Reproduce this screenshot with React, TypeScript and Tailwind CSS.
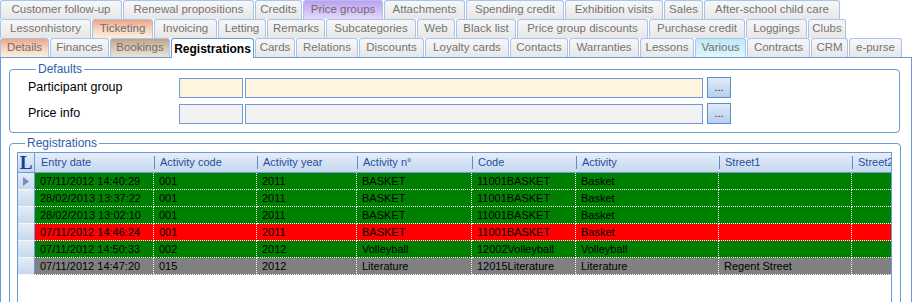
type Tone = "gray" | "orange" | "tan" | "purple" | "cyan" | "active";

type Tab = { label: string; w: number; tone?: Tone };

const tones: Record<Tone, string> = {
  gray: "bg-linear-to-b from-[#f7f7f7] to-[#e7e7e7] border-[#a7c4ea] text-[#747474]",
  orange: "bg-linear-to-b from-[#eea486] via-[#f6d4bd] to-[#fbeedf] border-[#a7c4ea] text-[#6e6e6e]",
  tan: "bg-linear-to-b from-[#bea488] via-[#d9c8b2] to-[#ede4d8] border-[#a7c4ea] text-[#6e6e6e]",
  purple: "bg-linear-to-b from-[#bf9ff2] to-[#e4d9fb] border-[#a7c4ea] text-[#6e6e6e]",
  cyan: "bg-linear-to-b from-[#bfe8f6] to-[#e3f5fb] border-[#a7c4ea] text-[#6e6e6e]",
  active: "bg-white border-[#6a9ad8] text-black font-bold h-[20px] -mb-px z-10 text-[12px]",
};

const row1: Tab[] = [
  { label: "Customer follow-up", w: 122 },
  { label: "Renewal propositions", w: 131 },
  { label: "Credits", w: 47 },
  { label: "Price groups", w: 80, tone: "purple" },
  { label: "Attachments", w: 81 },
  { label: "Spending credit", w: 98 },
  { label: "Exhibition visits", w: 98 },
  { label: "Sales", w: 39 },
  { label: "After-school child care", w: 136 },
];

const row2: Tab[] = [
  { label: "Lessonhistory", w: 91 },
  { label: "Ticketing", w: 61, tone: "orange" },
  { label: "Invoicing", w: 63 },
  { label: "Letting", w: 48 },
  { label: "Remarks", w: 58 },
  { label: "Subcategories", w: 90 },
  { label: "Web", w: 38 },
  { label: "Black list", w: 60 },
  { label: "Price group discounts", w: 131 },
  { label: "Purchase credit", w: 96 },
  { label: "Loggings", w: 61 },
  { label: "Clubs", w: 38 },
];

const row3: Tab[] = [
  { label: "Details", w: 49, tone: "orange" },
  { label: "Finances", w: 59 },
  { label: "Bookings", w: 60, tone: "tan" },
  { label: "Registrations", w: 83, tone: "active" },
  { label: "Cards", w: 40 },
  { label: "Relations", w: 62 },
  { label: "Discounts", w: 65 },
  { label: "Loyalty cards", w: 84 },
  { label: "Contacts", w: 58 },
  { label: "Warranties", w: 70 },
  { label: "Lessons", w: 54 },
  { label: "Various", w: 51, tone: "cyan" },
  { label: "Contracts", w: 63 },
  { label: "CRM", w: 37 },
  { label: "e-purse", w: 53 },
];

const columns = [
  { title: "Entry date", w: 119 },
  { title: "Activity code", w: 103 },
  { title: "Activity year", w: 100 },
  { title: "Activity n°", w: 115 },
  { title: "Code", w: 104 },
  { title: "Activity", w: 143 },
  { title: "Street1", w: 133 },
  { title: "Street2", w: 0 },
];

const rows = [
  { bg: "bg-[#008000]", cells: ["07/11/2012 14:40:29", "001", "2011", "BASKET", "11001BASKET", "Basket", "", ""] },
  { bg: "bg-[#008000]", cells: ["28/02/2013 13:37:22", "001", "2011", "BASKET", "11001BASKET", "Basket", "", ""] },
  { bg: "bg-[#008000]", cells: ["28/02/2013 13:02:10", "001", "2011", "BASKET", "11001BASKET", "Basket", "", ""] },
  { bg: "bg-[#ff0000]", cells: ["07/11/2012 14:46:24", "001", "2011", "BASKET", "11001BASKET", "Basket", "", ""] },
  { bg: "bg-[#008000]", cells: ["07/11/2012 14:50:33", "002", "2012", "Volleyball", "12002Volleyball", "Volleyball", "", ""] },
  { bg: "bg-[#808080]", cells: ["07/11/2012 14:47:20", "015", "2012", "Literature", "12015Literature", "Literature", "Regent Street", ""] },
];

function TabRow({ tabs }: { tabs: Tab[] }) {
  return (
    <div className="flex items-end gap-px h-[19px] text-[11.5px]">
      {tabs.map((t) => (
        <div
          key={t.label}
          style={{ width: t.w }}
          className={`relative h-[19px] shrink-0 flex items-center justify-center border border-b-0 rounded-t-[3px] whitespace-nowrap ${tones[t.tone ?? "gray"]}`}
        >
          {t.label}
        </div>
      ))}
    </div>
  );
}

function BrowseButton() {
  return (
    <button className="w-[24px] h-[21px] ml-1 border border-[#5d8ed5] bg-linear-to-b from-[#e2ecf7] via-[#c9dcf1] to-[#b6d1ee] text-[#7a0000] text-[11px] leading-none flex items-end justify-center pb-[4px]">
      ...
    </button>
  );
}

export default function App() {
  return (
    <div
      className="w-[913px] h-[302px] overflow-hidden bg-white text-[12px]"
      style={{ fontFamily: '"Liberation Sans", Arial, sans-serif' }}
    >
      <TabRow tabs={row1} />
      <TabRow tabs={row2} />
      <TabRow tabs={row3} />

      <div className="w-[912px] h-[260px] border border-[#6a9ad8] pt-[4px] pl-[8px]">
        <fieldset className="w-[891px] border border-[#6a9ad8] rounded-[4px] pl-[18px] pb-[8px]">
          <legend className="ml-[8px] px-[2px] text-[#2c5ea8] leading-[14px]">Defaults</legend>
          <div className="flex items-center h-[21px] mt-px">
            <span className="w-[151px] text-black text-[12.5px]">Participant group</span>
            <div className="w-[64px] h-[20px] border border-[#6f9ad4] bg-[#fdf5dd]" />
            <div className="w-[458px] h-[20px] ml-[2px] border border-[#6f9ad4] bg-[#fdf5dd]" />
            <BrowseButton />
          </div>
          <div className="flex items-center h-[21px] mt-[5px]">
            <span className="w-[151px] text-black text-[12.5px]">Price info</span>
            <div className="w-[64px] h-[20px] border border-[#6f9ad4] bg-[#f2f2f2]" />
            <div className="w-[458px] h-[20px] ml-[2px] border border-[#6f9ad4] bg-[#f2f2f2]" />
            <BrowseButton />
          </div>
        </fieldset>

        <fieldset className="w-[892px] mt-[3px] h-[200px] border border-[#6a9ad8] rounded-[4px] pl-[7px] pr-[7px]">
          <legend className="ml-[8px] px-[2px] text-[#2c5ea8] leading-[14px]">Registrations</legend>
          <div className="mt-[2px] w-[875px] h-[180px] border border-[#6a9ad8] bg-white text-[11px] overflow-hidden">
            <div className="flex h-[20px] border-b border-[#6a9ad8] bg-linear-to-b from-[#e6eef9] to-[#c6d7ee]">
              <div
                className="w-[17px] shrink-0 border-r border-[#6a9ad8] flex items-center justify-center text-[#1b3f8f] font-bold text-[19px] leading-none"
                style={{ fontFamily: '"Liberation Serif", serif' }}
              >
                L
              </div>
              {columns.map((c, i) => (
                <div
                  key={c.title}
                  style={c.w ? { width: c.w } : undefined}
                  className={`flex items-center whitespace-nowrap text-[#1f4f9e] ${c.w ? "shrink-0" : "flex-1 min-w-0"}`}
                >
                  {i > 0 && <span className="w-px h-[13px] bg-[#5b8bd0] shrink-0" />}
                  <span className={i > 0 ? "pl-[5px]" : "pl-[6px]"}>{c.title}</span>
                </div>
              ))}
            </div>
            {rows.map((r, ri) => (
              <div key={ri} className="flex h-[17px]">
                <div className="w-[17px] shrink-0 border-r border-[#6a9ad8] border-b border-b-[#f4f7fb] bg-linear-to-b from-[#e3ebf7] to-[#c9d8ee] flex items-center pl-[5px]">
                  {ri === 0 && (
                    <svg width="6" height="9" viewBox="0 0 6 9">
                      <path d="M0 0 L6 4.5 L0 9 Z" fill="#6f8fc6" />
                    </svg>
                  )}
                </div>
                {r.cells.map((cell, ci) => (
                  <div
                    key={ci}
                    style={columns[ci].w ? { width: columns[ci].w } : undefined}
                    className={`${r.bg} ${columns[ci].w ? "shrink-0 border-r" : "flex-1"} border-b border-dotted border-white pl-[5px] text-black whitespace-nowrap overflow-hidden flex items-center`}
                  >
                    {cell}
                  </div>
                ))}
              </div>
            ))}
          </div>
        </fieldset>
      </div>
    </div>
  );
}
